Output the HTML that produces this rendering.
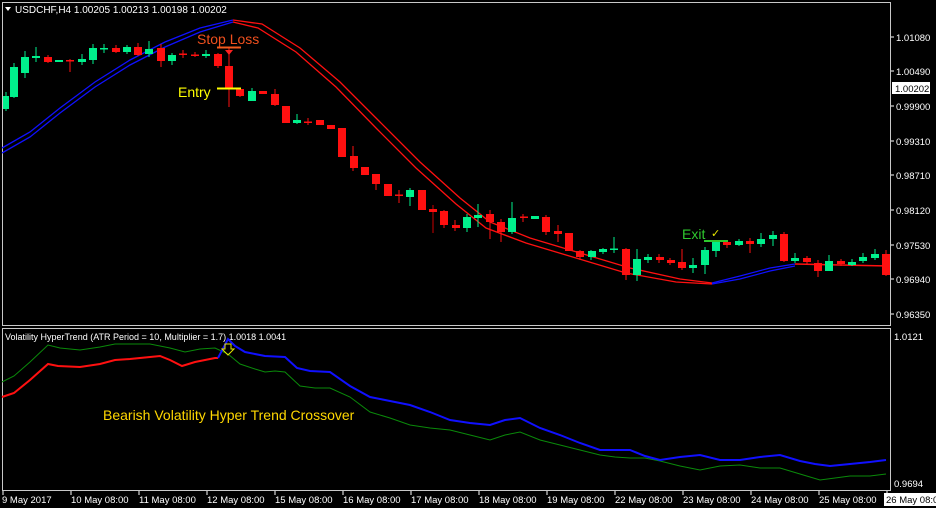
<!DOCTYPE html>
<html><head><meta charset="utf-8"><style>
html,body{margin:0;padding:0;background:#000;}
svg{display:block}
text{font-family:"Liberation Sans",sans-serif;}
</style></head><body>
<svg width="936" height="508" viewBox="0 0 936 508" xmlns="http://www.w3.org/2000/svg">
<rect width="936" height="508" fill="#000"/>
<rect x="2.5" y="2.5" width="888" height="323" fill="none" stroke="#c8c8c8" stroke-width="1"/>
<rect x="2.5" y="328.5" width="888" height="162" fill="none" stroke="#c8c8c8" stroke-width="1"/>
<path d="M5 7 L11 7 L8 11 Z" fill="#fff"/>
<text x="15" y="13" font-size="10" fill="#fff">USDCHF,H4  1.00205 1.00213 1.00198 1.00202</text>
<g fill="none" stroke-width="1.3">
<polyline stroke="#1010ff" points="2,148 30,132 60,108 95,82 130,60 165,42 200,28 233,20"/>
<polyline stroke="#1010ff" points="2,153 30,137 60,113 95,87 130,65 165,47 200,32 233,22"/>
<polyline stroke="#ff1010" points="233,20 262,24 300,48 340,82 380,122 420,162 460,198 490,222 530,238 580,253 630,268 680,279 712,283"/>
<polyline stroke="#ff1010" points="233,22 258,28 296,52 336,87 376,128 416,168 456,204 486,228 526,243 576,258 626,273 676,282 712,284"/>
<polyline stroke="#1010ff" points="712,283 740,276 770,268 795,264"/>
<polyline stroke="#1010ff" points="712,284 740,279 770,271 795,266"/>
<polyline stroke="#ff1010" stroke-width="1.6" points="795,264 840,265 889,266"/>
</g>
<g>
<line x1="6" y1="92" x2="6" y2="111" stroke="#00f08c"/><rect x="3" y="96" width="6" height="13" fill="#00f08c"/>
<line x1="14" y1="63" x2="14" y2="98" stroke="#00f08c"/><rect x="10" y="67" width="8" height="30" fill="#00f08c"/>
<line x1="25" y1="51" x2="25" y2="78" stroke="#00f08c"/><rect x="21" y="57" width="8" height="16" fill="#00f08c"/>
<line x1="36" y1="47" x2="36" y2="62" stroke="#00f08c"/><rect x="32" y="56" width="8" height="2" fill="#00f08c"/>
<line x1="48" y1="55" x2="48" y2="63" stroke="#ff1010"/><rect x="44" y="57" width="8" height="5" fill="#ff1010"/>
<rect x="55" y="60" width="8" height="2" fill="#00f08c"/>
<line x1="70" y1="59" x2="70" y2="72" stroke="#ff1010"/><rect x="66" y="60" width="8" height="1.5" fill="#ff1010"/>
<line x1="82" y1="54" x2="82" y2="65" stroke="#00f08c"/><rect x="78" y="59" width="8" height="3" fill="#00f08c"/>
<line x1="93" y1="44" x2="93" y2="64" stroke="#00f08c"/><rect x="89" y="48" width="8" height="12" fill="#00f08c"/>
<line x1="104" y1="44" x2="104" y2="53" stroke="#00f08c"/><rect x="100" y="48" width="8" height="1.5" fill="#00f08c"/>
<line x1="116" y1="45" x2="116" y2="53" stroke="#ff1010"/><rect x="112" y="48" width="8" height="4" fill="#ff1010"/>
<line x1="127" y1="45" x2="127" y2="54" stroke="#00f08c"/><rect x="123" y="47" width="8" height="5" fill="#00f08c"/>
<line x1="138" y1="43" x2="138" y2="56" stroke="#ff1010"/><rect x="134" y="47" width="8" height="8" fill="#ff1010"/>
<line x1="149" y1="41" x2="149" y2="57" stroke="#00f08c"/><rect x="145" y="49" width="8" height="5" fill="#00f08c"/>
<line x1="161" y1="44" x2="161" y2="67" stroke="#ff1010"/><rect x="157" y="48" width="8" height="13" fill="#ff1010"/>
<line x1="172" y1="53" x2="172" y2="65" stroke="#00f08c"/><rect x="168" y="55" width="8" height="6" fill="#00f08c"/>
<line x1="183" y1="50" x2="183" y2="58" stroke="#ff1010"/><rect x="179" y="53.5" width="8" height="1.5" fill="#ff1010"/>
<line x1="195" y1="52" x2="195" y2="57" stroke="#ff1010"/><rect x="191" y="54.5" width="8" height="1.5" fill="#ff1010"/>
<line x1="206" y1="50" x2="206" y2="58" stroke="#00f08c"/><rect x="202" y="54" width="8" height="2" fill="#00f08c"/>
<line x1="218" y1="53" x2="218" y2="68" stroke="#ff1010"/><rect x="214" y="54" width="8" height="12" fill="#ff1010"/>
<line x1="229" y1="48" x2="229" y2="107" stroke="#ff1010"/><rect x="225" y="66" width="8" height="23" fill="#ff1010"/>
<line x1="240" y1="88" x2="240" y2="97" stroke="#ff1010"/><rect x="236" y="89" width="8" height="7" fill="#ff1010"/>
<line x1="252" y1="88" x2="252" y2="101" stroke="#00f08c"/><rect x="248" y="91" width="8" height="10" fill="#00f08c"/>
<rect x="259" y="91" width="8" height="3" fill="#ff1010"/>
<line x1="275" y1="89" x2="275" y2="106" stroke="#ff1010"/><rect x="271" y="94" width="8" height="11" fill="#ff1010"/>
<rect x="282" y="106" width="8" height="17" fill="#ff1010"/>
<line x1="297" y1="114" x2="297" y2="124" stroke="#00f08c"/><rect x="293" y="120" width="8" height="3" fill="#00f08c"/>
<line x1="308" y1="118" x2="308" y2="125" stroke="#ff1010"/><rect x="304" y="121.5" width="8" height="1.5" fill="#ff1010"/>
<rect x="316" y="120" width="8" height="5" fill="#ff1010"/>
<rect x="327" y="125" width="8" height="4" fill="#ff1010"/>
<rect x="338" y="128" width="8" height="29" fill="#ff1010"/>
<line x1="353" y1="146" x2="353" y2="171" stroke="#ff1010"/><rect x="350" y="156" width="8" height="12" fill="#ff1010"/>
<rect x="361" y="167" width="8" height="8" fill="#ff1010"/>
<line x1="376" y1="174" x2="376" y2="190" stroke="#ff1010"/><rect x="372" y="174" width="8" height="10" fill="#ff1010"/>
<rect x="384" y="184" width="8" height="12" fill="#ff1010"/>
<line x1="399" y1="190" x2="399" y2="203" stroke="#ff1010"/><rect x="395" y="194.5" width="8" height="1.5" fill="#ff1010"/>
<line x1="410" y1="188" x2="410" y2="206" stroke="#00f08c"/><rect x="406" y="190" width="8" height="7" fill="#00f08c"/>
<rect x="418" y="190" width="8" height="20" fill="#ff1010"/>
<line x1="433" y1="205" x2="433" y2="233" stroke="#c00"/><rect x="429" y="209" width="8" height="3" fill="#ff1010"/>
<line x1="444" y1="210" x2="444" y2="228" stroke="#ff1010"/><rect x="440" y="211" width="8" height="14" fill="#ff1010"/>
<line x1="455" y1="220" x2="455" y2="231" stroke="#ff1010"/><rect x="452" y="225" width="8" height="3" fill="#ff1010"/>
<line x1="467" y1="214" x2="467" y2="232" stroke="#00f08c"/><rect x="463" y="217" width="8" height="11" fill="#00f08c"/>
<line x1="478" y1="204" x2="478" y2="227" stroke="#00f08c"/><rect x="474" y="215" width="8" height="3" fill="#00f08c"/>
<line x1="490" y1="210" x2="490" y2="239" stroke="#ff1010"/><rect x="486" y="214" width="8" height="8" fill="#ff1010"/>
<line x1="501" y1="219" x2="501" y2="242" stroke="#ff1010"/><rect x="497" y="222" width="8" height="10" fill="#ff1010"/>
<line x1="512" y1="202" x2="512" y2="234" stroke="#00f08c"/><rect x="508" y="218" width="8" height="14" fill="#00f08c"/>
<line x1="523" y1="214" x2="523" y2="222" stroke="#ff1010"/><rect x="520" y="216.5" width="8" height="1.5" fill="#ff1010"/>
<rect x="531" y="216" width="8" height="3" fill="#00f08c"/>
<line x1="546" y1="215" x2="546" y2="235" stroke="#ff1010"/><rect x="542" y="217" width="8" height="15" fill="#ff1010"/>
<line x1="558" y1="225" x2="558" y2="242" stroke="#ff1010"/><rect x="554" y="231" width="8" height="3" fill="#ff1010"/>
<rect x="565" y="233" width="8" height="18" fill="#ff1010"/>
<line x1="580" y1="250" x2="580" y2="260" stroke="#ff1010"/><rect x="576" y="251" width="8" height="6" fill="#ff1010"/>
<line x1="591" y1="250" x2="591" y2="260" stroke="#00f08c"/><rect x="588" y="251" width="8" height="6" fill="#00f08c"/>
<line x1="603" y1="248" x2="603" y2="254" stroke="#00f08c"/><rect x="599" y="249" width="8" height="3" fill="#00f08c"/>
<line x1="614" y1="237" x2="614" y2="253" stroke="#00f08c"/><rect x="610" y="248.5" width="8" height="1.5" fill="#00f08c"/>
<line x1="626" y1="248" x2="626" y2="280" stroke="#ff1010"/><rect x="622" y="249" width="8" height="26" fill="#ff1010"/>
<line x1="637" y1="249" x2="637" y2="281" stroke="#00f08c"/><rect x="633" y="259" width="8" height="16" fill="#00f08c"/>
<line x1="648" y1="254" x2="648" y2="263" stroke="#00f08c"/><rect x="644" y="257" width="8" height="3" fill="#00f08c"/>
<line x1="659" y1="254" x2="659" y2="263" stroke="#ff1010"/><rect x="656" y="257" width="8" height="3" fill="#ff1010"/>
<line x1="670" y1="258" x2="670" y2="265" stroke="#ff1010"/><rect x="667" y="260" width="8" height="3" fill="#ff1010"/>
<line x1="682" y1="249" x2="682" y2="270" stroke="#ff1010"/><rect x="678" y="262" width="8" height="6" fill="#ff1010"/>
<line x1="693" y1="258" x2="693" y2="273" stroke="#00f08c"/><rect x="689" y="265" width="8" height="3" fill="#00f08c"/>
<line x1="705" y1="247" x2="705" y2="274" stroke="#00f08c"/><rect x="701" y="250" width="8" height="15" fill="#00f08c"/>
<line x1="716" y1="240" x2="716" y2="257" stroke="#00f08c"/><rect x="712" y="242" width="8" height="9" fill="#00f08c"/>
<line x1="727" y1="240" x2="727" y2="248" stroke="#ff1010"/><rect x="723" y="242" width="8" height="3" fill="#ff1010"/>
<line x1="739" y1="239" x2="739" y2="246" stroke="#00f08c"/><rect x="735" y="241" width="8" height="4" fill="#00f08c"/>
<line x1="750" y1="238" x2="750" y2="253" stroke="#ff1010"/><rect x="746" y="241" width="8" height="3" fill="#ff1010"/>
<line x1="761" y1="233" x2="761" y2="247" stroke="#00f08c"/><rect x="757" y="239" width="8" height="5" fill="#00f08c"/>
<line x1="773" y1="231" x2="773" y2="246" stroke="#00f08c"/><rect x="769" y="235" width="8" height="4" fill="#00f08c"/>
<line x1="784" y1="232" x2="784" y2="262" stroke="#ff1010"/><rect x="780" y="234" width="8" height="27" fill="#ff1010"/>
<line x1="795" y1="253" x2="795" y2="263" stroke="#00f08c"/><rect x="791" y="258" width="8" height="3" fill="#00f08c"/>
<line x1="807" y1="256" x2="807" y2="264" stroke="#ff1010"/><rect x="803" y="258" width="8" height="4" fill="#ff1010"/>
<line x1="818" y1="260" x2="818" y2="277" stroke="#ff1010"/><rect x="814" y="263" width="8" height="8" fill="#ff1010"/>
<line x1="829" y1="255" x2="829" y2="271" stroke="#00f08c"/><rect x="825" y="261" width="8" height="10" fill="#00f08c"/>
<line x1="841" y1="259" x2="841" y2="266" stroke="#ff1010"/><rect x="837" y="261" width="8" height="3" fill="#ff1010"/>
<line x1="852" y1="259" x2="852" y2="266" stroke="#00f08c"/><rect x="848" y="262" width="8" height="3" fill="#00f08c"/>
<line x1="863" y1="253" x2="863" y2="263" stroke="#00f08c"/><rect x="859" y="257" width="8" height="4" fill="#00f08c"/>
<line x1="875" y1="249" x2="875" y2="260" stroke="#00f08c"/><rect x="871" y="254" width="8" height="4" fill="#00f08c"/>
<line x1="886" y1="250" x2="886" y2="276" stroke="#ff1010"/><rect x="882" y="254" width="8" height="21" fill="#ff1010"/>
</g>
<text x="197" y="44" font-size="14" fill="#f0501e">Stop Loss</text>
<line x1="217" y1="47.5" x2="241" y2="47.5" stroke="#f05a1e" stroke-width="2"/>
<path d="M225 50 L233 50 L229 55 Z" fill="#ff2020"/>
<text x="178" y="97" font-size="14" fill="#ffff00">Entry</text>
<line x1="217" y1="88.5" x2="241" y2="88.5" stroke="#ffff00" stroke-width="2"/>
<text x="682" y="239" font-size="14" fill="#2ec82e">Exit</text>
<text x="711" y="237" font-size="11" fill="#e6e600">✓</text>
<line x1="704" y1="241" x2="728" y2="241" stroke="#2ec82e" stroke-width="2"/>
<g font-size="9.5" fill="#fff">
<line x1="891" y1="37" x2="894" y2="37" stroke="#fff"/><text x="896" y="41">1.01080</text>
<line x1="891" y1="71" x2="894" y2="71" stroke="#fff"/><text x="896" y="75">1.00490</text>
<rect x="892" y="82" width="38" height="12" fill="#fff"/><text x="895" y="92" fill="#000">1.00202</text>
<line x1="891" y1="106" x2="894" y2="106" stroke="#fff"/><text x="896" y="110">0.99900</text>
<line x1="891" y1="141" x2="894" y2="141" stroke="#fff"/><text x="896" y="145">0.99310</text>
<line x1="891" y1="175" x2="894" y2="175" stroke="#fff"/><text x="896" y="179">0.98710</text>
<line x1="891" y1="210" x2="894" y2="210" stroke="#fff"/><text x="896" y="214">0.98120</text>
<line x1="891" y1="245" x2="894" y2="245" stroke="#fff"/><text x="896" y="249">0.97530</text>
<line x1="891" y1="279" x2="894" y2="279" stroke="#fff"/><text x="896" y="283">0.96940</text>
<line x1="891" y1="314" x2="894" y2="314" stroke="#fff"/><text x="896" y="318">0.96350</text>
<text x="894" y="340">1.0121</text>
<text x="894" y="487">0.9694</text>
</g>
<text x="5" y="340" font-size="9" fill="#fff">Volatility HyperTrend (ATR Period = 10, Multiplier = 1.7) 1.0018 1.0041</text>
<g fill="none">
<polyline stroke="#0a8a0a" stroke-width="1" points="2,382 14,376 30,362 48,345 60,348 80,350 100,347 115,344 130,344 150,344 170,348 185,352 200,349 215,348 228,354 240,364 255,369 265,372 275,371 285,372 300,386 315,388 330,388 350,397 370,412 390,418 410,425 430,428 450,430 470,435 490,440 505,435 520,432 540,440 560,445 580,450 600,455 615,457 630,458 645,458 660,461 680,466 700,470 720,466 740,465 760,468 780,468 800,474 820,480 835,478 850,476 870,476 886,474"/>
<polyline stroke="#ff1010" stroke-width="2" points="2,397 14,393 30,380 48,364 58,366 80,367 100,364 115,360 130,359 150,357 160,356 170,360 182,366 195,362 215,358 218,358"/>
<polyline stroke="#1010ff" stroke-width="2" points="218,358 228,339 235,346 245,352 265,356 285,357 297,368 310,371 330,372 350,386 370,397 390,401 410,405 430,412 450,420 470,423 490,425 505,420 520,418 540,428 560,435 580,443 600,450 615,450 630,450 645,456 660,460 680,457 700,455 720,460 740,460 760,457 780,455 800,461 815,464 830,466 850,464 870,462 886,460"/>
</g>
<path d="M225 344 L231 344 L231 349 L234 349 L228 355 L222 349 L225 349 Z" fill="none" stroke="#e6e600" stroke-width="1"/>
<text x="103" y="420" font-size="14" fill="#ffd700">Bearish Volatility Hyper Trend Crossover</text>
<g stroke="#fff">
<line x1="3" y1="491" x2="3" y2="495"/><line x1="71" y1="491" x2="71" y2="495"/><line x1="139" y1="491" x2="139" y2="495"/><line x1="207" y1="491" x2="207" y2="495"/><line x1="275" y1="491" x2="275" y2="495"/><line x1="343" y1="491" x2="343" y2="495"/><line x1="411" y1="491" x2="411" y2="495"/><line x1="479" y1="491" x2="479" y2="495"/><line x1="547" y1="491" x2="547" y2="495"/><line x1="615" y1="491" x2="615" y2="495"/><line x1="683" y1="491" x2="683" y2="495"/><line x1="751" y1="491" x2="751" y2="495"/><line x1="819" y1="491" x2="819" y2="495"/><line x1="887" y1="491" x2="887" y2="495"/>
</g>
<g font-size="9.5" fill="#fff">
<text x="2" y="503">9 May 2017</text>
<text x="71" y="503">10 May 08:00</text>
<text x="139" y="503">11 May 08:00</text>
<text x="207" y="503">12 May 08:00</text>
<text x="275" y="503">15 May 08:00</text>
<text x="343" y="503">16 May 08:00</text>
<text x="411" y="503">17 May 08:00</text>
<text x="479" y="503">18 May 08:00</text>
<text x="547" y="503">19 May 08:00</text>
<text x="615" y="503">22 May 08:00</text>
<text x="683" y="503">23 May 08:00</text>
<text x="751" y="503">24 May 08:00</text>
<text x="819" y="503">25 May 08:00</text>
<rect x="884" y="493" width="52" height="13" fill="#fff"/>
<text x="886" y="503" fill="#000">26 May 08:00</text>
</g>
</svg>
</body></html>
